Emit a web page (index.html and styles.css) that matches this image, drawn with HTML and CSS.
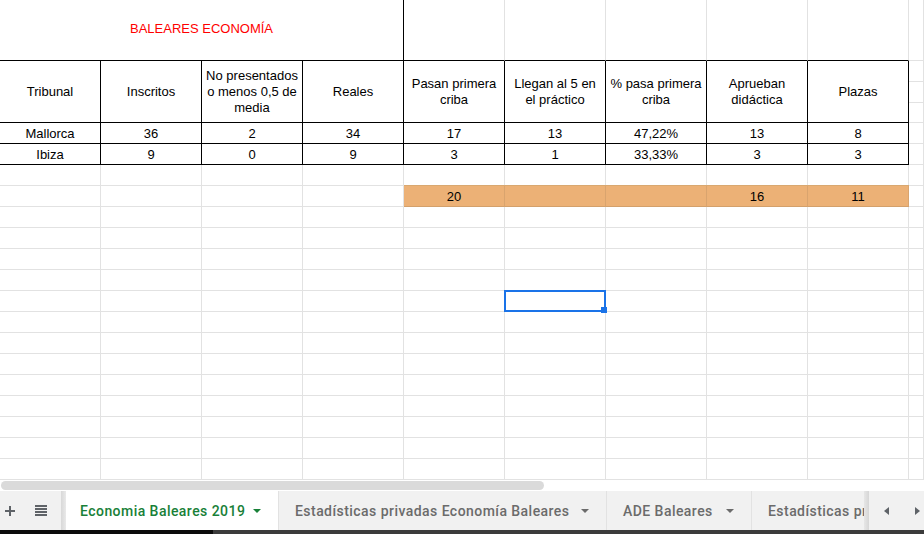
FILE: index.html
```html
<!DOCTYPE html>
<html lang="es">
<head>
<meta charset="utf-8">
<title>Economia Baleares 2019</title>
<link rel="stylesheet" href="styles.css">
</head>
<body>
<div class="app">
  <div class="grid">
    <!-- row 1 -->
    <div class="c title bk-r bk-b">BALEARES ECONOMÍA</div>
    <div class="c bk-b"></div>
    <div class="c bk-b"></div>
    <div class="c bk-b"></div>
    <div class="c bk-b"></div>
    <div class="c bk-b"></div>
    <div class="c"></div>
    <!-- header (rows 2-4) -->
    <div class="c h bk-r bk-b">Tribunal</div>
    <div class="c h bk-r bk-b">Inscritos</div>
    <div class="c h bk-r bk-b">No presentados o menos 0,5 de media</div>
    <div class="c h bk-r bk-b">Reales</div>
    <div class="c h bk-r bk-b">Pasan primera criba</div>
    <div class="c h bk-r bk-b">Llegan al 5 en el práctico</div>
    <div class="c h bk-r bk-b">% pasa primera criba</div>
    <div class="c h bk-r bk-b">Aprueban didáctica</div>
    <div class="c h bk-r bk-b">Plazas</div>
    <div class="c"></div>
    <div class="c"></div>
    <div class="c"></div>
    <!-- data -->
    <div class="c bk-r bk-b">Mallorca</div>
    <div class="c bk-r bk-b">36</div>
    <div class="c bk-r bk-b">2</div>
    <div class="c bk-r bk-b">34</div>
    <div class="c bk-r bk-b">17</div>
    <div class="c bk-r bk-b">13</div>
    <div class="c bk-r bk-b">47,22%</div>
    <div class="c bk-r bk-b">13</div>
    <div class="c bk-r bk-b">8</div>
    <div class="c"></div>

    <div class="c bk-r bk-b">Ibiza</div>
    <div class="c bk-r bk-b">9</div>
    <div class="c bk-r bk-b">0</div>
    <div class="c bk-r bk-b">9</div>
    <div class="c bk-r bk-b">3</div>
    <div class="c bk-r bk-b">1</div>
    <div class="c bk-r bk-b">33,33%</div>
    <div class="c bk-r bk-b">3</div>
    <div class="c bk-r bk-b">3</div>
    <div class="c"></div>

    <!-- empty row -->
    <div class="c"></div><div class="c"></div><div class="c"></div><div class="c"></div><div class="c"></div>
    <div class="c"></div><div class="c"></div><div class="c"></div><div class="c"></div><div class="c"></div>

    <!-- totals -->
    <div class="c"></div><div class="c"></div><div class="c"></div><div class="c"></div>
    <div class="c og">20</div>
    <div class="c og"></div>
    <div class="c og"></div>
    <div class="c og">16</div>
    <div class="c og">11</div>
    <div class="c"></div>

    <!-- empty rows -->
    <div class="c"></div><div class="c"></div><div class="c"></div><div class="c"></div><div class="c"></div><div class="c"></div><div class="c"></div><div class="c"></div><div class="c"></div><div class="c"></div>
    <div class="c"></div><div class="c"></div><div class="c"></div><div class="c"></div><div class="c"></div><div class="c"></div><div class="c"></div><div class="c"></div><div class="c"></div><div class="c"></div>
    <div class="c"></div><div class="c"></div><div class="c"></div><div class="c"></div><div class="c"></div><div class="c"></div><div class="c"></div><div class="c"></div><div class="c"></div><div class="c"></div>
    <div class="c"></div><div class="c"></div><div class="c"></div><div class="c"></div><div class="c"></div><div class="c"></div><div class="c"></div><div class="c"></div><div class="c"></div><div class="c"></div>
    <div class="c"></div><div class="c"></div><div class="c"></div><div class="c"></div><div class="c"></div><div class="c sel"></div><div class="c"></div><div class="c"></div><div class="c"></div><div class="c"></div>
    <div class="c"></div><div class="c"></div><div class="c"></div><div class="c"></div><div class="c"></div><div class="c"></div><div class="c"></div><div class="c"></div><div class="c"></div><div class="c"></div>
    <div class="c"></div><div class="c"></div><div class="c"></div><div class="c"></div><div class="c"></div><div class="c"></div><div class="c"></div><div class="c"></div><div class="c"></div><div class="c"></div>
    <div class="c"></div><div class="c"></div><div class="c"></div><div class="c"></div><div class="c"></div><div class="c"></div><div class="c"></div><div class="c"></div><div class="c"></div><div class="c"></div>
    <div class="c"></div><div class="c"></div><div class="c"></div><div class="c"></div><div class="c"></div><div class="c"></div><div class="c"></div><div class="c"></div><div class="c"></div><div class="c"></div>
    <div class="c"></div><div class="c"></div><div class="c"></div><div class="c"></div><div class="c"></div><div class="c"></div><div class="c"></div><div class="c"></div><div class="c"></div><div class="c"></div>
    <div class="c"></div><div class="c"></div><div class="c"></div><div class="c"></div><div class="c"></div><div class="c"></div><div class="c"></div><div class="c"></div><div class="c"></div><div class="c"></div>
    <div class="c"></div><div class="c"></div><div class="c"></div><div class="c"></div><div class="c"></div><div class="c"></div><div class="c"></div><div class="c"></div><div class="c"></div><div class="c"></div>
    <div class="c"></div><div class="c"></div><div class="c"></div><div class="c"></div><div class="c"></div><div class="c"></div><div class="c"></div><div class="c"></div><div class="c"></div><div class="c"></div>
  </div>

  <div class="hscroll"><div class="thumb"></div></div>

  <div class="tabbar">
    <div class="tools">
      <svg class="ico-plus" width="10" height="10" viewBox="0 0 10 10"><path d="M5 0v10M0 5h10" stroke="#5f6368" stroke-width="2" fill="none"/></svg>
      <svg class="ico-list" width="12" height="11" viewBox="0 0 12 11"><path d="M0 0h12v2H0zM0 3h12v2H0zM0 6h12v2H0zM0 9h12v2H0z" fill="#5f6368"/></svg>
    </div>
    <div class="shade"></div>
    <div class="tab active tab1"><span class="tname">Economia Baleares 2019</span><span class="caret"></span></div>
    <div class="tab tab2"><span class="tname">Estadísticas privadas Economía Baleares</span><span class="caret"></span></div>
    <div class="tab tab3"><span class="tname">ADE Baleares</span><span class="caret"></span></div>
    <div class="tab tab4"><span class="tname">Estadísticas privadas ADE Baleares</span></div>
    <div class="shade shade-r"></div>
    <div class="nav">
      <span class="tri-l"></span>
      <span class="tri-r"></span>
    </div>
  </div>

  <div class="dock"><div class="dock-l"></div><div class="dock-r"></div></div>
</div>
</body>
</html>
```

FILE: styles.css
```css
* { box-sizing: border-box; }

html, body {
  margin: 0;
  padding: 0;
  background: #fff;
}

.app {
  width: 924px;
  height: 534px;
  overflow: hidden;
  display: flex;
  flex-direction: column;
  font-family: "Liberation Sans", Arial, sans-serif;
  font-size: 13px;
  color: #000;
}

.grid {
  display: grid;
  grid-template-columns: repeat(9, 101px) 1fr;
  grid-template-rows: 61px 21px 21px 20px repeat(17, 21px);
  height: 480px;
  flex: none;
}

.c {
  border-right: 1px solid #e2e2e2;
  border-bottom: 1px solid #e2e2e2;
  display: flex;
  align-items: flex-end;
  justify-content: center;
  text-align: center;
  line-height: 16px;
  padding: 0 3px 1px;
  white-space: nowrap;
  overflow: hidden;
}

.bk-r { border-right-color: #000; }
.bk-b { border-bottom-color: #000; }

.title {
  grid-column: span 4;
  color: #ff0000;
  align-items: center;
  padding-bottom: 3px;
}

.h {
  grid-row: span 3;
  align-items: center;
  white-space: normal;
  padding: 0 3px;
}

.og {
  background: #ecb176;
  border-right-color: #d9a46e;
  border-bottom-color: #d3a06b;
  box-shadow: 0 -1px 0 #d9a870;
}

.sel {
  position: relative;
  overflow: visible;
}
.sel::before {
  content: "";
  position: absolute;
  left: -1px;
  top: -1px;
  right: -1px;
  bottom: -1px;
  border: 2px solid #1a73e8;
}
.sel::after {
  content: "";
  position: absolute;
  width: 6px;
  height: 6px;
  right: -2px;
  bottom: -2px;
  background: #1a73e8;
}

/* horizontal scrollbar */
.hscroll {
  height: 11px;
  flex: none;
  background: #fff;
  padding: 1px 0 1px 1px;
}
.thumb {
  width: 543px;
  height: 9px;
  border-radius: 5px;
  background: #dadada;
}

/* sheet tabs */
.tabbar {
  height: 39px;
  flex: none;
  display: flex;
  background: #f1f1f1;
  font-family: Roboto, "Liberation Sans", sans-serif;
  font-weight: 500;
  font-size: 14px;
  letter-spacing: 0.45px;
  color: #6b6b6b;
}

.tools {
  width: 61px;
  flex: none;
  display: flex;
  align-items: center;
}
.ico-plus { margin-left: 5px; }
.ico-list { margin-left: 20px; }

.shade {
  width: 5px;
  flex: none;
  background: linear-gradient(to right, #d8d8d8, #e9e9e9);
}
.shade-r {
  width: 5px;
  background: linear-gradient(to right, #e6e6e6, #d6d6d6);
}

.tab {
  flex: none;
  display: flex;
  align-items: center;
  padding: 0 17px 0 16px;
  border-right: 1px solid #e2e2e2;
  white-space: nowrap;
  overflow: hidden;
}
.tab .caret {
  margin-left: auto;
  flex: none;
  width: 0;
  height: 0;
  border-left: 4px solid transparent;
  border-right: 4px solid transparent;
  border-top: 4px solid #6b6b6b;
}
.tab.active {
  background: #fff;
  color: #188038;
  padding-left: 14px;
}
.tab.active .caret { border-top-color: #188038; }

.tab1 { width: 213px; }
.tab2 { width: 328px; }
.tab3 { width: 145px; }
.tab4 {
  flex: 1 1 auto;
  min-width: 0;
  border-right: none;
  padding-right: 0;
}

.nav {
  width: 55px;
  flex: none;
  display: flex;
  align-items: center;
  padding-left: 15px;
}
.tri-l {
  width: 0;
  height: 0;
  border-top: 4.5px solid transparent;
  border-bottom: 4.5px solid transparent;
  border-right: 5px solid #5f6368;
}
.tri-r {
  margin-left: 26px;
  width: 0;
  height: 0;
  border-top: 4.5px solid transparent;
  border-bottom: 4.5px solid transparent;
  border-left: 5px solid #5f6368;
}

.dock {
  height: 4px;
  flex: none;
  display: flex;
}
.dock-l { width: 213px; background: #0b0b0b; }
.dock-r { flex: 1; background: #3b3b3b; }
```
